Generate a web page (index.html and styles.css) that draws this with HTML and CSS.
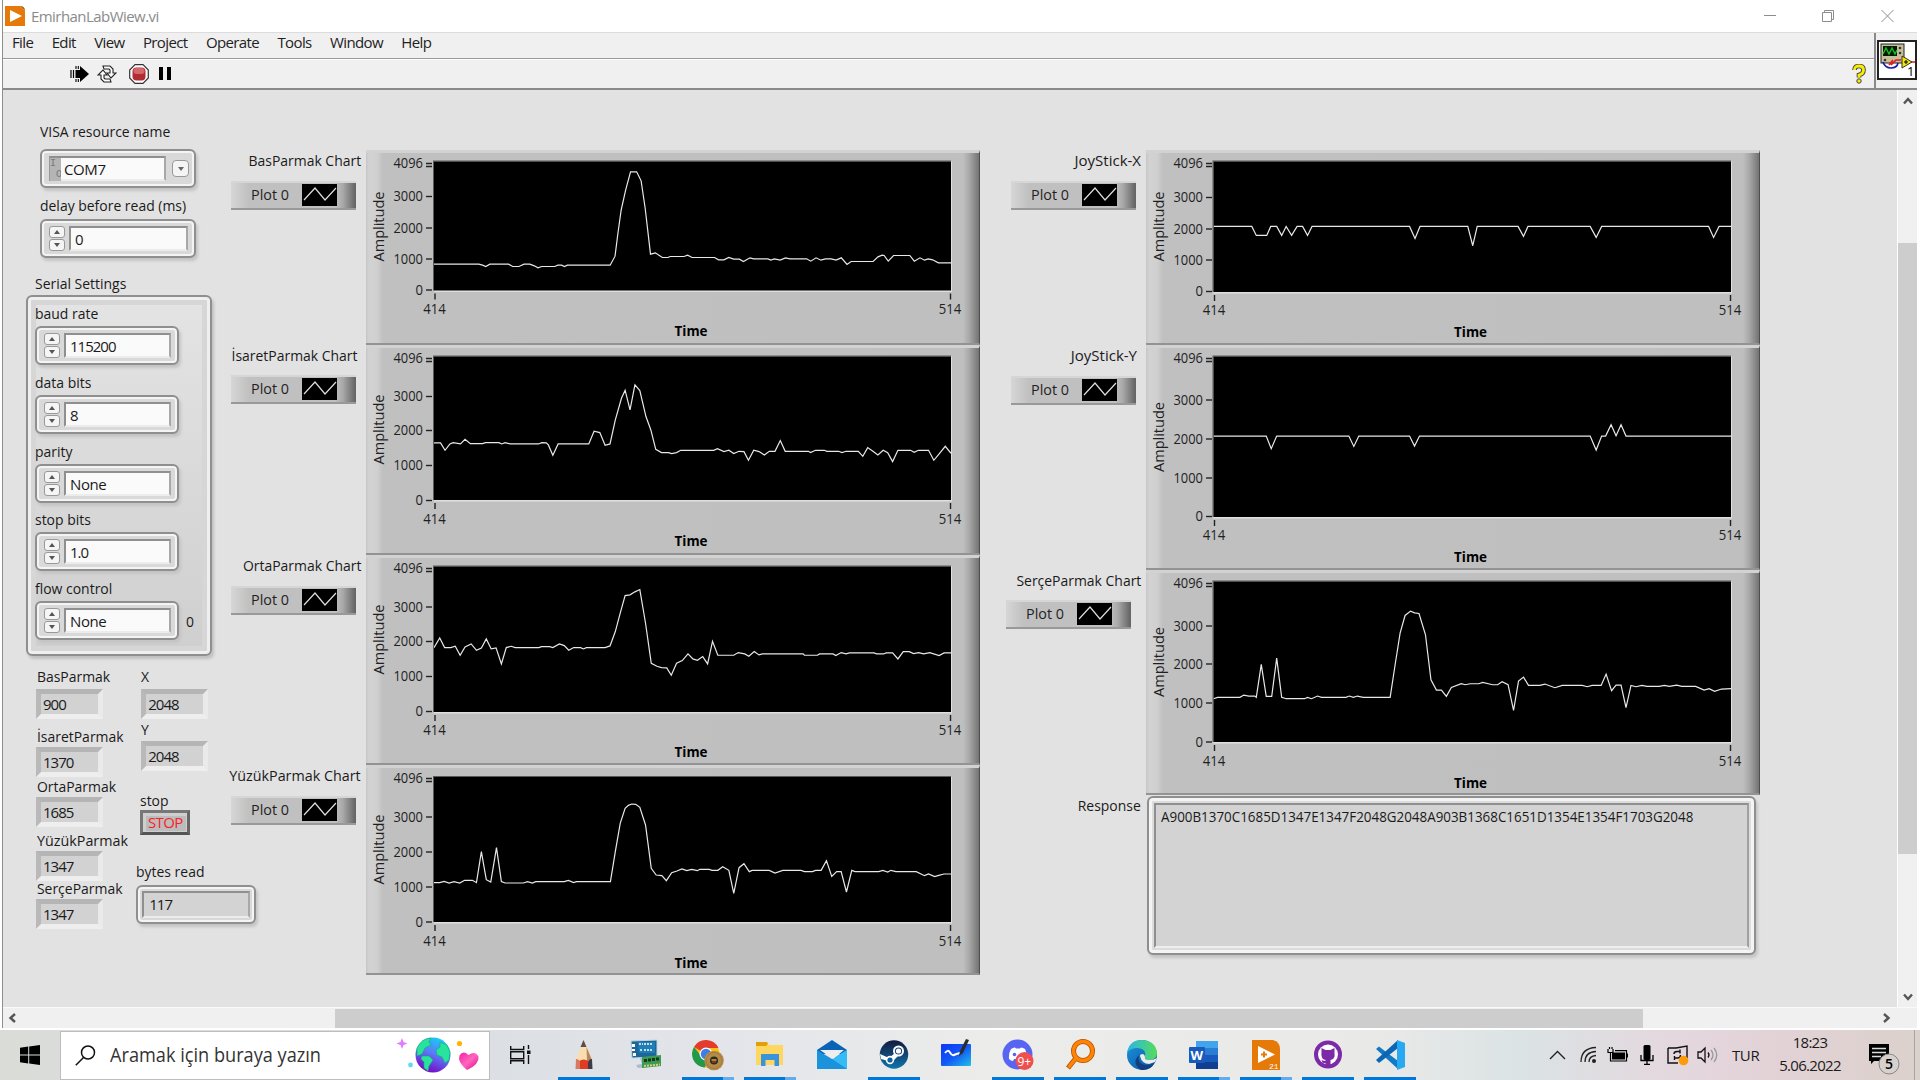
FILE: index.html
```html
<!DOCTYPE html>
<html lang="tr">
<head>
<meta charset="utf-8">
<title>EmirhanLabWiew.vi</title>
<link rel="stylesheet" href="styles.css">
</head>
<body>
<div class="window">
  <header class="titlebar">
    <svg class="app-icon" width="20" height="20" viewBox="0 0 20 20"><path d="M0 0h15l5 5v15H0z" fill="#e57a08"/><path d="M15 0q5 0 5 5z" fill="#b85e00"/><path d="M5 4v12l12-6z" fill="#fff"/></svg>
    <span class="title">EmirhanLabWiew.vi</span>
    <svg class="caption" width="130" height="14" viewBox="0 0 130 14" fill="none" stroke="#8d8d8d" stroke-width="1"><path d="M0 6.500h12M58.500 3.500h9v9h-9zM60.500 3.500v-2h9v9h-2M117.500 1l12 12M129.500 1l-12 12"/></svg>
  </header>

  <div class="bars">
    <div class="bars-main">
      <nav class="menubar"><span>File</span><span>Edit</span><span>View</span><span>Project</span><span>Operate</span><span>Tools</span><span>Window</span><span>Help</span></nav>
      <div class="toolbar">
        <svg class="tool-run" width="20" height="18" viewBox="0 0 20 18"><path d="M1 5v8M3.500 5v8" stroke="#000" stroke-width="1.200"/><path d="M5.500 5H10V1l9 8-9 8v-4H5.500z" fill="#000"/><path d="M6 1v3M8.300 1v3M6 14v3M8.300 14v3" stroke="#000" stroke-width="1.100"/></svg>
        <svg class="tool-loop" width="20" height="18" viewBox="0 0 20 18" fill="#fff" stroke="#222" stroke-width="1.100"><path d="M6 1h7l3 3v4h3l-5 5-4-5h3V5l-1-1H7z"/><path d="M14 17H7l-3-3v-4H1l5-5 4 5H7v3l1 1h5z"/></svg>
        <svg class="tool-stop" width="20" height="20" viewBox="0 0 20 20"><path d="M6 .7h8L19.300 6v8L14 19.300H6L.7 14V6z" fill="#fff" stroke="#333" stroke-width="1.200"/><rect x="3.500" y="3.500" width="13" height="13" rx="4" fill="#b22d33"/><rect x="4.500" y="4" width="11" height="6" rx="3" fill="#d2686b"/></svg>
        <svg class="tool-pause" width="12" height="14" viewBox="0 0 12 14"><path d="M0 0h4v13H0zM8 0h4v13H8z" fill="#000"/></svg>
        <svg class="tool-help" width="14" height="20" viewBox="0 0 14 20"><path d="M2.500 6q0-4 4.500-4t4.500 4-4.500 5v2.500" fill="none" stroke="#444" stroke-width="4.600"/><path d="M2.500 6q0-4 4.500-4t4.500 4-4.500 5v2.500" fill="none" stroke="#f8ec00" stroke-width="2.800"/><circle cx="7" cy="17" r="2.200" fill="#f8ec00" stroke="#444"/></svg>
      </div>
    </div>
    <div class="vi-icon">
      <svg width="40" height="40" viewBox="0 0 40 40"><rect x="1" y="1" width="38" height="38" fill="#fff" stroke="#222" stroke-width="2"/><rect x="4" y="4" width="23" height="19" fill="#c9bf9b" stroke="#222"/><rect x="6" y="6" width="14" height="10" fill="#061a06"/><path d="M6 14l3-6 3 6 3-6 3 6 2-4" fill="none" stroke="#11c322" stroke-width="1.400"/><g fill="#333"><circle cx="23" cy="8" r="1.300"/><circle cx="23" cy="13" r="1.300"/><circle cx="8" cy="20" r="1.300"/></g><path d="M6 22q2 6 8 6t7-5" fill="none" stroke="#1a1aa8" stroke-width="1.600"/><path d="M12 25l4-5M14 25l5-5h5M34 22h4" fill="none" stroke="#e01a1a" stroke-width="1.600"/><path d="M25 16v12l10-6z" fill="#f3e60a" stroke="#333"/><path d="M27 22h4M29 20v4" stroke="#000"/><text x="30" y="36" class="vi-num">1</text></svg>
    </div>
  </div>

  <main class="workspace">
    <div class="panel">
      <section class="controls">
        <div class="io">
          <label class="lbl">VISA resource name</label>
          <div class="ctl ctl-wide"><span class="visa-tag"><i>I</i><i>O</i></span><span class="field field-visa">COM7</span><span class="drop"></span></div>
          <label class="lbl lbl-delay">delay before read (ms)</label>
          <div class="ctl ctl-wide"><span class="spin"><b></b><b></b></span><span class="field num">0</span></div>
        </div>
        <label class="lbl lbl-serial">Serial Settings</label>
        <div class="cluster">
          <label class="lbl">baud rate</label>
          <div class="row"><div class="ctl"><span class="spin"><b></b><b></b></span><span class="field num">115200</span></div></div>
          <label class="lbl">data bits</label>
          <div class="row"><div class="ctl"><span class="spin"><b></b><b></b></span><span class="field num">8</span></div></div>
          <label class="lbl">parity</label>
          <div class="row"><div class="ctl"><span class="spin"><b></b><b></b></span><span class="field">None</span></div></div>
          <label class="lbl">stop bits</label>
          <div class="row"><div class="ctl"><span class="spin"><b></b><b></b></span><span class="field num">1.0</span></div></div>
          <label class="lbl">flow control</label>
          <div class="row"><div class="ctl"><span class="spin"><b></b><b></b></span><span class="field">None</span></div><span class="lbl">0</span></div>
        </div>
        <div class="readouts">
          <div class="fingers">
            <label class="lbl">BasParmak</label><div class="ind">900</div>
            <label class="lbl gap-a">İsaretParmak</label><div class="ind ind-near">1370</div>
            <label class="lbl gap-b">OrtaParmak</label><div class="ind ind-near">1685</div>
            <label class="lbl gap-c wide-u">YüzükParmak</label><div class="ind ind-near">1347</div>
            <label class="lbl gap-d">SerçeParmak</label><div class="ind ind-near">1347</div>
          </div>
          <div class="sticks">
            <label class="lbl">X</label><div class="ind">2048</div>
            <label class="lbl">Y</label><div class="ind ind-y">2048</div>
            <label class="lbl gap-stop">stop</label><div class="stop">STOP</div>
            <label class="lbl gap-bytes">bytes read</label><div class="ctl ctl-bytes"><span class="field num">117</span></div>
          </div>
        </div>
      </section>

      <section class="legends">
        <div class="leg"><label class="lbl">BasParmak Chart</label><div class="plotkey"></div></div>
        <div class="leg"><label class="lbl in3">İsaretParmak Chart</label><div class="plotkey up1"></div></div>
        <div class="leg"><label class="lbl">OrtaParmak Chart</label><div class="plotkey"></div></div>
        <div class="leg"><label class="lbl wide-u">YüzükParmak Chart</label><div class="plotkey"></div></div>
      </section>
      <section class="charts">
        <svg class="chart h195" data-chart="bas"></svg>
        <svg class="chart h210" data-chart="isaret"></svg>
        <svg class="chart h210" data-chart="orta"></svg>
        <svg class="chart h210" data-chart="yuzuk"></svg>
      </section>
      <section class="legends legends-right">
        <div class="leg"><label class="lbl full">JoyStick-X</label><div class="plotkey"></div></div>
        <div class="leg leg-tall"><label class="lbl full in4">JoyStick-Y</label><div class="plotkey"></div></div>
        <div class="leg leg-tall"><label class="lbl">SerçeParmak Chart</label><div class="plotkey shift5"></div></div>
        <div class="leg"><label class="lbl">Response</label></div>
      </section>
      <section class="charts">
        <svg class="chart h195" data-chart="joyx"></svg>
        <svg class="chart h225" data-chart="joyy"></svg>
        <svg class="chart h225" data-chart="serce"></svg>
        <div class="response"><div class="response-text"><span>A900B1370C1685D1347E1347F2048G2048A903B1368C1651D1354E1354F1703G2048</span></div></div>
      </section>
    </div>
    <div class="vscroll">
      <svg width="10" height="9" viewBox="0 0 10 9"><path d="M1 7.500l4-4.500 4 4.500" fill="none" stroke="#555" stroke-width="2.400"/></svg>
      <div class="vthumb"></div>
      <svg width="10" height="9" viewBox="0 0 10 9"><path d="M1 1.500l4 4.500 4-4.500" fill="none" stroke="#555" stroke-width="2.400"/></svg>
    </div>
  </main>
  <div class="hscroll">
    <svg width="9" height="10" viewBox="0 0 9 10"><path d="M7 1L2.500 5 7 9" fill="none" stroke="#555" stroke-width="2.400"/></svg>
    <div class="hthumb"></div>
    <svg width="9" height="10" viewBox="0 0 9 10"><path d="M2 1l4.500 4L2 9" fill="none" stroke="#555" stroke-width="2.400"/></svg>
  </div>
</div>

<footer class="taskbar">
  <div class="start"><svg width="20" height="20" viewBox="0 0 20 20"><path d="M0 2.800L8.200 1.600v7.900H0zM9.200 1.500L20 0v9.500H9.200zM0 10.500h8.200v7.900L0 17.200zM9.200 10.500H20V20L9.200 18.500z"/></svg></div>
  <div class="search">
    <svg width="21" height="21" viewBox="0 0 21 21" fill="none" stroke="#111" stroke-width="1.500"><circle cx="13" cy="7.500" r="6.500"/><path d="M8.500 12.500L.8 20.200"/></svg>
    <span class="search-text">Aramak için buraya yazın</span>
    <svg class="doodle" width="86" height="40" viewBox="0 0 86 40">
      <defs><linearGradient id="globe" x1=".7" y1="0" x2=".3" y2="1"><stop offset="0" stop-color="#16d0f5"/><stop offset=".45" stop-color="#5a7bf8"/><stop offset="1" stop-color="#7a00c2"/></linearGradient><linearGradient id="heart" x1="0" y1="0" x2="1" y2="1"><stop offset="0" stop-color="#f51fa8"/><stop offset=".5" stop-color="#ff66bd"/><stop offset="1" stop-color="#e0008a"/></linearGradient></defs>
      <path d="M5 3l1.500 4 4 1.500-4 1.500L5 14l-1.500-4-4-1.500 4-1.500z" fill="#e27bff"/>
      <circle cx="36" cy="20" r="17.500" fill="url(#globe)"/>
      <path d="M20 13q5-10 14-10l-2 4 2 3-6 3-3 6-5 2zM25 21l7 0 4 4-4 6-1 5-4-3v-6l-3-3zM43 7l7 3 3 7-1 8-4 3-3-6-5-2-1-5 4-3z" fill="#27e39b" stroke="#12a878" stroke-width=".6"/>
      <circle cx="62.500" cy="8.500" r="2.600" fill="#ffb300"/><circle cx="13.500" cy="30" r="2.400" fill="#62d9ee"/>
      <path d="M70 35q-10-8-7.500-14.500 3.500-5.500 9-.5 6.500-4.500 10 1.500 1 8-11.500 13.500z" fill="url(#heart)"/>
    </svg>
  </div>
  <div class="taskview"><svg width="22" height="20" viewBox="0 0 22 20" fill="none" stroke="#111" stroke-width="1.400"><path d="M.7 1v3.500h13V1M.7 6.700h13v7H.7zM.7 19v-3.300h13V19M18.500 0v4M18.500 10v9"/><path d="M17 5.500h3.500v3.500H17z" fill="#111" stroke="none"/></svg></div>
  <div class="apps">
    <div class="app on"><svg width="32" height="32" viewBox="0 0 32 32"><path d="M15.500 1L21 13l3 8-8.500 4L8 21z" fill="#f7deb0"/><path d="M15.500 1l3 7h-6z" fill="#5b4b52"/><path d="M18.500 8L24 21v3l-5-2z" fill="#b9855a"/><path d="M12 30l-1-8q5-3 9 0v8z" fill="#e23b23"/><path d="M8 20q3 0 4 3v7H7.500z" fill="#d87a62"/><path d="M24 20q-3 0-4 3v7h4.500z" fill="#3c3b47"/></svg></div>
    <div class="app"><svg width="32" height="32" viewBox="0 0 32 32"><path d="M1 2l26-1v17L2 19z" fill="#1c6797" stroke="#bdd5df"/><path d="M8 3h17v11H9z" fill="#1f7db8"/><path d="M9 5h4M14 5h9M10 11h3M14 11h9" stroke="#c4deec" stroke-width="2" stroke-dasharray="2 1"/><path d="M3.500 5v3M3.500 10v2M4.500 14v3" stroke="#fff" stroke-width="3"/><path d="M10 19h6v6h-4zM6 26l12-2v4l-10 1z" fill="#a9bccb"/><path d="M12 18l19-2v11l-19 2z" fill="#3e9a53"/><path d="M14 20h3v3h-3zM18 19.500h3v3h-3zM22 19h3v3h-3zM26 18.500h3v3h-3z" fill="#123a1d"/><path d="M14 27l16-1.500" stroke="#d6cf7a" stroke-width="2" stroke-dasharray="2 1"/></svg></div>
    <div class="app on split"><svg width="32" height="32" viewBox="0 0 32 32"><circle cx="14" cy="15" r="13.500" fill="#fbc116"/><path d="M14 15L2 8A13.700 13.700 0 0 1 26.500 9H14z" fill="#e33b2e"/><path d="M2 8a13.500 13.500 0 0 0 10.500 20.500L18 19l-8-1z" fill="#22984a"/><circle cx="14" cy="15" r="6.500" fill="#fff"/><circle cx="14" cy="15" r="5.200" fill="#3b7ded"/><circle cx="22" cy="21.500" r="9.800" fill="#b58b4a"/><circle cx="22" cy="21.500" r="8" fill="none" stroke="#a37a3c"/><circle cx="22" cy="21.500" r="4" fill="#2b2a25"/><path d="M19.500 21h5" stroke="#d4a82b" stroke-width="1.500"/><path d="M20 23h4" stroke="#a23822" stroke-width="1.500"/></svg></div>
    <div class="app on split"><svg width="32" height="32" viewBox="0 0 32 32"><path d="M2 3h11l2 3h14v20H2z" fill="#ffd75e"/><path d="M2 3h11l1 2-2 2H2z" fill="#dfa008"/><path d="M7 27V15h18v12h-4.500v-6h-9v6z" fill="#3a93dd"/></svg></div>
    <div class="app"><svg width="32" height="32" viewBox="0 0 32 32"><path d="M1 11L16 1l15 10v4H1z" fill="#0b63b8"/><path d="M1 11l15 9 15-9v19H1z" fill="#1b93dc"/><path d="M31 11v19L16 20z" fill="#35bbf5"/><path d="M4 11h24l-11 9z" fill="#eee"/></svg></div>
    <div class="app on"><svg width="32" height="32" viewBox="0 0 32 32"><defs><linearGradient id="steam" x1="0" y1="0" x2="0" y2="1"><stop offset="0" stop-color="#131a3d"/><stop offset="1" stop-color="#0f74ac"/></linearGradient></defs><circle cx="16" cy="15.500" r="14.200" fill="url(#steam)"/><path d="M2 15l9 4 6-5 3 3-6 6-11-3z" fill="#fff"/><circle cx="20.500" cy="12" r="5.500" fill="#fff"/><circle cx="20.500" cy="12" r="3.600" fill="#16406f"/><circle cx="20.500" cy="12" r="2.600" fill="#fff"/><circle cx="12" cy="21" r="4.200" fill="#fff"/><circle cx="12" cy="21" r="2.600" fill="#11629a"/></svg></div>
    <div class="app"><svg width="32" height="32" viewBox="0 0 32 32"><defs><linearGradient id="wb" x1="0" y1="0" x2="1" y2="1"><stop offset="0" stop-color="#0d35f5"/><stop offset=".5" stop-color="#1258f5"/><stop offset="1" stop-color="#22c0e8"/></linearGradient></defs><rect x="1" y="5" width="30" height="22" rx="1" fill="url(#wb)"/><path d="M5 14q3-4 5-.5t4 2.500 6-2" fill="none" stroke="#fff" stroke-width="2"/><path d="M26 0l3 1-6 13-4 3 1-5z" fill="#2c2c30"/></svg></div>
    <div class="app on"><svg width="32" height="32" viewBox="0 0 32 32"><circle cx="15.500" cy="15.500" r="15" fill="#5865f2"/><path d="M9 10q3-2 4-1.500l1 1h4l1-1q2 0 4 1.500 2.500 5 2 10-2 2-4 2l-1-2h-8l-1 2q-2 0-4-2-.5-6 2-10z" fill="#fff"/><circle cx="12.500" cy="15.500" r="1.800" fill="#5865f2"/><circle cx="22.500" cy="22" r="9" fill="#f04f50"/><text x="15.500" y="26.500" class="badge-9">9+</text></svg></div>
    <div class="app on"><svg width="32" height="32" viewBox="0 0 32 32" fill="none"><circle cx="19" cy="12" r="9.500" stroke="#b85000" stroke-width="5"/><path d="M12 19L4 29" stroke="#b85000" stroke-width="5"/><circle cx="19" cy="12" r="9.500" stroke="#ff8405" stroke-width="3.400"/><path d="M12.500 18.500L4.500 28.500" stroke="#ff8405" stroke-width="3.400"/></svg></div>
    <div class="app on"><svg width="32" height="32" viewBox="0 0 32 32"><defs><linearGradient id="edge1" x1="0" y1="0" x2="1" y2="0"><stop offset="0" stop-color="#2ab5e8"/><stop offset="1" stop-color="#55dc5a"/></linearGradient><linearGradient id="edge2" x1="0" y1="0" x2="1" y2="1"><stop offset="0" stop-color="#1a96df"/><stop offset="1" stop-color="#0c4f9e"/></linearGradient></defs><circle cx="16" cy="16" r="15" fill="url(#edge2)"/><path d="M1 14Q3 1 16 1q14 1 15 13 0 7-8 7-5 0-4-3 2-8-7-9Q4 9 1 14z" fill="url(#edge1)"/><path d="M13 16q-2 8 6 10 6 1 10-3-4 9-14 8-10-7-2-15z" fill="#123f80"/><path d="M14 17q2 8 9 8l6-2 2-4q-3 2-8 2-5 0-4-3 0-2-2-3-3 0-3 2z" fill="#ececec"/></svg></div>
    <div class="app on split"><svg width="32" height="32" viewBox="0 0 32 32"><path d="M8 2h22v28H8z" fill="#185abd"/><path d="M8 2h22v7H8z" fill="#41a5ee"/><path d="M8 9h22v7H8z" fill="#2b7cd3"/><path d="M8 23h22v7H8z" fill="#103f91"/><rect x="1" y="8" width="16" height="16" rx="1" fill="#185abd"/><text x="2.500" y="21" class="word-w">W</text></svg></div>
    <div class="app on split"><svg width="32" height="32" viewBox="0 0 32 32"><path d="M2 1h21q7 2 7 9v21H2z" fill="#e57a08"/><path d="M8 7v17l17-8.500z" fill="#fff"/><path d="M11 15.500h6M14 12.500v6" stroke="#e57a08" stroke-width="2"/><text x="19" y="29.500" class="lv-21">21</text></svg></div>
    <div class="app on"><svg width="32" height="32" viewBox="0 0 32 32"><circle cx="16" cy="15.500" r="14" fill="#7d2aa6"/><circle cx="16" cy="15.500" r="10" fill="#fff"/><path d="M9.500 9l4 2h5l4-2v5q1 6-4 7v6h-5v-3q-3 1-4-3 2 1 4 1v-1q-5-1-4-8z" fill="#7d2aa6"/></svg></div>
    <div class="app on"><svg width="32" height="32" viewBox="0 0 32 32"><path d="M2 10l3-2.500L24 22v8z" fill="#1279c6"/><path d="M2 21l3 3L24 9V1z" fill="#0b66b4"/><path d="M23 1l8 3v24l-8 3z" fill="#29a9f2"/></svg></div>
  </div>
  <div class="tray">
    <svg class="t-chev" width="17" height="10" viewBox="0 0 17 10" fill="none" stroke="#222" stroke-width="1.400"><path d="M1 9l7.500-7.500L16 9"/></svg>
    <svg class="t-wifi" width="18" height="18" viewBox="0 0 18 18" fill="none" stroke="#222" stroke-width="1.300"><path d="M1 16Q1 2 16 1.500M5 16Q5 6 16 5.500M9 16q0-6 7-6.500"/><circle cx="14" cy="15" r="2" fill="#222" stroke="none"/></svg>
    <svg class="t-bat" width="21" height="16" viewBox="0 0 21 16"><path d="M5 5.500h13v7H5z" fill="#000"/><path d="M3.500 7v7h16V3.700H8M20.500 6.500v4M1 2v3.500h5V2M2.500 2V0M5 2V0M3.500 6v3" fill="none" stroke="#000" stroke-width="1.200"/></svg>
    <svg class="t-mic" width="14" height="20" viewBox="0 0 14 20"><rect x="3.500" y="0" width="7" height="15" rx="1.500"/><path d="M1 10v5.500h12V10M7 15.500V19M4 19.300h6" fill="none" stroke="#000" stroke-width="1.300"/></svg>
    <svg class="t-sync" width="22" height="21" viewBox="0 0 22 21" fill="none" stroke="#111" stroke-width="1.400"><path d="M1 3h8l11-2v12M1 3v15h10"/><path d="M7 9q0-2.500 3-2.500h3M13 4.500v4M13.500 10q0 3-3 3H7M7.500 15v-4"/><circle cx="16.500" cy="15.500" r="4.800" fill="#ff9a0d" stroke="none"/></svg>
    <svg class="t-vol" width="21" height="18" viewBox="0 0 21 18" fill="none" stroke="#111" stroke-width="1.300"><path d="M1 6h3l4-4v14l-4-4H1zM11 6.500q2 2.500 0 5"/><path d="M14 4q4 5 0 10M17 2q5.500 7 0 14" stroke="#999"/></svg>
    <span class="lang">TUR</span>
    <div class="clock"><span>18:23</span><span>5.06.2022</span></div>
    <svg class="t-note" width="31" height="31" viewBox="0 0 31 31"><path d="M0 0h20v17H5l-3 3v-3H0z"/><path d="M3 4.500h14M3 8.500h14M3 12.500h9" stroke="#ddd" stroke-width="1.300"/><circle cx="20" cy="20" r="10" fill="#d7d1ce" stroke="#888"/><text x="20" y="25" class="note-n">5</text></svg>
    <i class="peek"></i>
  </div>
</footer>
<script src="charts.js"></script>
</body>
</html>
```
FILE: styles.css
```css
* { box-sizing: border-box; }
body { margin: 0; width: 1920px; height: 1080px; overflow: hidden; background: #fff; font-family: "Open Sans", "Noto Sans", sans-serif; font-size: 15px; color: #1a1a1a; }
svg { display: block; }
.window { width: 1915px; height: 1028px; border-left: 1px solid #8e8e8e; margin-left: 2px; display: flex; flex-direction: column; }

.titlebar { height: 32px; flex: none; display: flex; align-items: center; background: #fff; padding-left: 2px; }
.title { margin-left: 6px; color: #8b8b8b; letter-spacing: -.55px; }
.caption { margin-left: auto; margin-right: 23px; }

.bars { height: 58px; flex: none; display: flex; background: #f0f0f0; border-top: 1px solid #dcdcdc; border-bottom: 2px solid #8a8a8a; }
.bars-main { flex: 1; display: flex; flex-direction: column; border-right: 2px solid #8a8a8a; }
.menubar { height: 26px; display: flex; align-items: center; gap: 18.400px; padding: 0 0 7px 9px; border-bottom: 1px solid #9a9a9a; color: #222; letter-spacing: -.62px; }
.toolbar { flex: 1; display: flex; align-items: center; border-top: 1px solid #fff; padding: 0 0 1px 67px; }
.tool-loop { margin-left: 7px; }
.tool-stop { margin-left: 12px; }
.tool-pause { margin-left: 10px; }
.tool-help { margin-left: auto; margin-right: 8px; }
.vi-icon { width: 41px; padding: 7px 0 0 1px; }
.vi-num { font-size: 13px; }

.workspace { flex: 1; display: flex; min-height: 0; background: #e2e2e2; border-bottom: 1px solid #fafafa; }
.panel { flex: 1; display: flex; align-items: flex-start; }
.lbl { display: block; height: 20px; line-height: 20px; white-space: nowrap; transform: scaleX(.93); transform-origin: left; }
.lbl.full { transform: none; }
.lbl.wide-u { transform: scaleX(.955); }

.controls { width: 227px; padding-top: 31px; flex: none; }
.io { padding-left: 37px; }
.lbl-delay { margin-top: 6px; }
.io .ctl { margin-top: 8px; }
.io .lbl-delay { margin-top: 7px; }
.io .lbl-delay + .ctl { margin-top: 4px; }
.lbl-serial { margin: 15px 0 0 32px; }

.ctl { width: 143px; height: 39px; display: flex; align-items: center; gap: 4px; padding: 6px 7px; border: 2px solid #8f8f8f; border-radius: 6px; background: #d9d9d9; box-shadow: inset 0 0 0 2px #f4f4f4, 2px 3px 3px #c4c4c4; }
.ctl-wide { width: 156px; }
.field { flex: 1; align-self: stretch; margin: -1px; padding-left: 4px; background: #fafafa; border: 2px solid; border-color: #8f8f8f #a8a8a8 #ececec #8f8f8f; line-height: 22px; white-space: nowrap; letter-spacing: -.4px; }
.num, .ind { letter-spacing: -1px; }
.spin { width: 16px; display: flex; flex-direction: column; gap: 1px; margin-right: 1px; }
.spin b { height: 12px; border: 1px solid #999; border-radius: 3px; background: #f5f5f5; display: flex; align-items: center; justify-content: center; }
.spin b::before { content: ""; border: 3px solid transparent; border-top-width: 0; border-bottom: 4px solid #555; }
.spin b + b::before { border-top: 4px solid #555; border-bottom-width: 0; }
.visa-tag { width: 13px; align-self: stretch; margin: -1px -4px -1px 0; background: #b5b5b5; color: #777; font: 10px/11px "Liberation Mono", monospace; border-top: 2px solid #8f8f8f; border-left: 1px solid #999; }
.visa-tag i { display: block; font-style: normal; }
.visa-tag i + i { padding-left: 6px; }
.field-visa { padding-left: 3px; border-left: 0; }
.drop { width: 17px; height: 17px; margin: 0 -2px 0 3px; border: 1px solid #999; border-radius: 4px; background: #f4f4f4; display: flex; align-items: center; justify-content: center; }
.drop::before { content: ""; border: 3.500px solid transparent; border-top: 4px solid #666; border-bottom-width: 0; }

.cluster { margin: 2px 0 0 23px; width: 186px; height: 361px; padding: 6px 0 0 7px; border: 2px solid #8f8f8f; border-radius: 6px; background: linear-gradient(#e4e4e4, #cfcfcf); box-shadow: inset 0 0 0 3px #efefef, inset 0 0 0 8px #d6d6d6, 2px 3px 3px #c0c0c0; }
.cluster .row { display: flex; align-items: center; gap: 7px; height: 39px; margin: 3px 0 6.800px; }
.cluster .ctl { width: 144px; }

.readouts { display: flex; padding-left: 33px; margin-top: 10px; }
.fingers { width: 101px; }
.fingers .lbl { padding-left: 1px; }
.ind { width: 67px; height: 30px; margin-top: 3px; padding-left: 2px; line-height: 20px; border: 5px solid; border-color: #b5b5b5 #eaeaea #eeeeee #b9b9b9; background: #d2d2d2; }
.ind-near { margin-top: 1px; }
.ind-y { margin-top: 2px; }
.gap-a { margin-top: 7px; }
.gap-b { margin-top: -1px; }
.gap-c { margin-top: 3px; }
.gap-d { margin-top: -3px; }
.sticks { padding-left: 5px; margin-left: 4px; width: 130px; }
.gap-stop { margin-top: 19px; }
.sticks .gap-stop { margin-left: -1px; }
.stop { margin-left: -1px; width: 50px; height: 25px; line-height: 19px; text-align: center; color: #fb2028; background: #bcbcbc; border: 3px solid; border-color: #777 #666 #555 #777; box-shadow: inset 1px 1px 0 2px #cfcfcf; letter-spacing: -.7px; }
.gap-bytes { margin: 26px 0 0 -5px; }
.ctl-bytes { width: 120px; margin: 4px 0 0 -5px; padding: 5px; }
.ctl-bytes .field, .response-text { background: #d3d3d3; }
.ctl-bytes .field { padding-left: 5px; }

.legends { width: 136px; flex: none; padding: 60px 5px 0 0; }
.legends .lbl { transform-origin: right; }
.legends-right { width: 166px; padding-left: 30px; }
.leg { height: 210px; display: flex; flex-direction: column; align-items: flex-end; }
.leg:first-child { height: 195px; }
.leg-tall { height: 225px; }
.in3 { margin-right: 3px; }
.in4 { margin-right: 4px; }
.plotkey { margin: 11px 5px 0 0; width: 125px; height: 29px; display: flex; align-items: center; border-bottom: 2px solid #999; border-top: 2px solid #d6d6d6; background: linear-gradient(90deg, #d6d6d6, #c0c0c0 18px, #c0c0c0 104px, #a8a8a8 112px, #666 124px); }
.up1 { margin-top: 10px; }
.shift5 { margin: 10px 10px 0 0; }

.charts { width: 614px; flex: none; padding-top: 60px; }
.chart { width: 614px; border-top: 3px solid #d2d2d2; border-bottom: 2px solid #939393; border-right: 1px solid #4e4e4e; background: linear-gradient(90deg, #c6c6c6, #d2d2d2 3px, #d0d0d0 11px, #c0c0c0 17px, #bfbfbf 597px, #a9a9a9 603px, #6e6e6e 614px); }
.h195 { height: 195px; }
.h210 { height: 210px; }
.h225 { height: 225px; }
.chart text, .plotkey text { font-size: 15px; fill: #1f1f1f; }
.chart .axis-title { font-weight: 700; fill: #000; }
.chart .trace { fill: none; stroke: #e8e8e8; stroke-width: 1.200; }
.chart .tick { stroke: #222; stroke-width: 1.400; fill: none; }

.response { margin: 1px 0 0 1px; width: 609px; height: 159px; padding: 5px; border: 2px solid #8f8f8f; border-radius: 6px; background: #dcdcdc; box-shadow: inset 0 0 0 3px #f4f4f4, 2px 3px 3px #c4c4c4; }
.response-text { height: 145px; padding-left: 5px; line-height: 23px; border: 2px solid; border-color: #8f8f8f #a0a0a0 #eee #8f8f8f; white-space: nowrap; overflow: hidden; }
.response-text span { display: inline-block; transform: scaleX(.893); transform-origin: left; }

.vscroll { width: 20px; background: #f0f0f0; border-left: 1px solid #fff; display: flex; flex-direction: column; align-items: center; padding: 6px 0 5px; justify-content: space-between; }
.vthumb { width: 19px; height: 611px; margin: 0 0 2px; background: #cdcdcd; }
.hscroll { height: 20px; flex: none; background: #f0f0f0; display: flex; align-items: center; padding: 0 26px 0 5px; }
.hthumb { width: 1308px; height: 19px; margin: 0 auto 0 318px; background: #cdcdcd; }

.taskbar { margin-top: 2px; height: 50px; display: flex; align-items: center; background: linear-gradient(90deg, #dadcd8, #dcdfe3 500px, #e3e5ea 720px, #ececea 1000px, #e9e9e8 1380px, #dbe3e4 1520px, #e4d7de 1680px, #e2d2d6 1780px, #dbd1cb 1920px); }
.start { width: 60px; padding-left: 20px; }
.search { width: 430px; height: 49px; display: flex; align-items: center; padding-left: 14px; background: #fff; border: 1px solid #bdbdbd; }
.search-text { margin: -1px 0 0 14px; font-size: 20px; color: #333; white-space: nowrap; transform: scaleX(.908); transform-origin: left; }
.doodle { margin-left: auto; margin-right: 6px; }
.taskview { width: 63px; padding-left: 20px; }
.apps { display: flex; align-self: stretch; }
.app { width: 62px; padding: 9px 5px 0; display: flex; flex-direction: column; align-items: center; justify-content: space-between; }
.app.on::after { content: ""; width: 52px; height: 3px; background: #0078d7; }
.app.split::after { background: linear-gradient(90deg, #0078d7 41px, #62aceb 41px); }
.badge-9 { font-size: 12px; fill: #fff; }
.word-w { font-size: 13px; font-weight: 700; fill: #fff; }
.lv-21 { font: 8px "Liberation Mono", monospace; fill: #fff; }
.tray { flex: 1; display: flex; align-items: center; padding-left: 128px; height: 50px; }
.t-wifi { margin-left: 14px; }
.t-bat { margin-left: 9px; }
.t-mic { margin-left: 12px; }
.t-sync { margin-left: 13px; }
.t-vol { margin-left: 8px; }
.lang { margin-left: 14px; width: 29px; letter-spacing: -.4px; }
.clock { margin: -3px 0 0 9px; width: 80px; display: flex; flex-direction: column; align-items: center; gap: 3px; line-height: 20px; letter-spacing: -.7px; }
.t-note { margin: 9px 0 0 19px; }
.note-n { font-size: 14px; text-anchor: middle; font-weight: 600; }
.peek { width: 1px; height: 50px; margin-left: auto; margin-right: 5px; background: #a9a3a3; }
```
FILE: charts.js
```js
// Each chart: plot rectangle, Y-scale tick positions (0..4096), label centres,
// and its trace in the trace's own coordinate box.
var LEFT = { x: 68, w: 517, amp: 12.5, time: 325 };
var RIGHT = { x: 67.5, w: 517.5, amp: 12.5, time: 324.5 };
var CHARTS = {
  bas: { side: LEFT, y: 11.5, h: 129, ticks: [140, 109, 78, 46.5, 13.5], amp: 76.5, box: "181 64 1268 387",
    pts: "181,372 291,372 300,375 308,379 318,372 364,372 374,379 389,379 402,372 416,372 427,377 436,383 445,379 477,379 485,375 494,375 501,379 508,375 613,375 625,348 632,280 640,210 651,150 663,95 678,95 689,122 699,205 712,342 724,338 741,352 755,352 760,349 794,349 803,345 814,352 869,352 879,359 892,359 904,352 916,357 930,357 940,364 956,353 965,356 1000,356 1007,360 1016,356 1030,360 1043,353 1054,356 1095,356 1105,363 1118,353 1130,360 1141,356 1155,356 1167,360 1180,353 1194,373 1204,364 1258,364 1270,350 1280,345 1285,346 1295,363 1308,346 1348,346 1359,363 1373,353 1384,360 1393,356 1404,359 1418,368 1450,368" },
  isaret: { side: LEFT, y: 11.5, h: 143.5, ticks: [155.5, 120.5, 85.5, 51.5, 13.5], amp: 84.5, box: "181 650 1266 430",
    pts: "181,909 197,909 208,931 220,912 228,908 246,912 257,898 270,911 300,911 307,908 340,908 347,912 355,908 368,912 437,912 445,908 456,909 461,915 472,946 485,912 560,912 573,874 587,878 600,916 612,912 625,840 640,775 649,751 661,810 673,735 685,752 700,830 712,870 724,928 738,938 755,938 763,941 775,938 785,931 866,931 875,926 891,935 903,931 915,941 928,934 940,935 951,961 964,931 977,935 990,945 1002,934 1016,934 1029,902 1041,934 1098,934 1103,938 1115,931 1137,931 1143,934 1172,934 1180,938 1190,934 1220,934 1231,949 1243,923 1255,933 1268,945 1281,931 1292,938 1304,965 1317,931 1348,931 1357,937 1367,931 1392,931 1405,961 1418,942 1433,919 1447,940" },
  orta: { side: LEFT, y: 11.5, h: 145.500, ticks: [156.5, 121.5, 86.5, 52, 13.5], amp: 84.5, box: "181 50 1266 436",
    pts: "181,293 195,264 207,293 222,293 233,289 245,316 257,291 272,282 285,301 297,294 309,267 321,297 333,294 346,342 358,293 370,289 380,293 438,293 444,290 464,290 472,293 488,282 500,287 511,301 523,293 540,293 547,297 554,293 600,293 612,288 625,245 637,190 649,137 661,135 673,126 685,119 699,220 713,340 727,349 738,353 751,354 762,376 775,340 789,332 803,312 815,327 826,331 839,320 851,342 863,274 876,316 915,316 926,308 942,312 952,319 965,305 977,315 985,312 1085,312 1088,316 1120,316 1125,312 1158,312 1165,317 1178,308 1190,312 1198,309 1258,309 1265,312 1282,312 1288,309 1304,309 1317,327 1330,305 1345,305 1355,311 1368,308 1380,312 1395,308 1418,317 1430,309 1447,309" },
  yuzuk: { side: LEFT, y: 12, h: 145, ticks: [157, 122, 87, 52, 13.5], amp: 84.5, box: "181 681 1266 435",
    pts: "181,998 195,998 206,994 218,999 230,995 244,999 256,991 275,991 285,998 297,905 309,989 320,996 334,893 346,995 355,999 400,999 410,995 422,999 430,995 500,995 510,991 523,998 530,995 613,995 625,905 637,820 649,775 657,766 665,762 675,763 685,772 699,825 713,955 725,975 739,977 750,992 763,968 776,963 788,957 800,962 812,958 826,962 832,958 855,958 862,961 876,961 888,950 903,961 915,1030 928,953 940,941 953,965 960,961 1002,961 1016,969 1035,961 1080,961 1088,965 1108,965 1115,961 1129,961 1142,932 1155,979 1167,965 1178,965 1191,1026 1204,961 1212,965 1270,965 1280,961 1292,966 1300,961 1312,965 1362,965 1382,977 1392,972 1407,980 1417,976 1430,972 1447,972" },
  joyx: { side: RIGHT, y: 11.5, h: 130.500, ticks: [141.5, 110, 79, 47.5, 13.5], amp: 76.5, box: "429 64 1040 392",
    pts: "429,259 506,259 515,286 536,286 544,259 556,259 566,286 575,259 586,286 597,259 608,259 618,286 627,259 823,259 834,295 844,259 940,259 950,317 959,259 1041,259 1052,289 1061,259 1186,259 1198,292 1209,259 1424,259 1434,292 1445,259 1469,259" },
  joyy: { side: RIGHT, y: 11.5, h: 160.500, ticks: [171.5, 133, 94, 55, 13.5], amp: 92, box: "429 650 1040 482",
    pts: "429,889 535,889 545,927 556,889 701,889 711,920 721,889 823,889 833,919 843,889 1186,889 1198,931 1209,889 1217,889 1228,855 1238,888 1248,855 1258,889 1469,889" },
  serce: { side: RIGHT, y: 11.5, h: 160.500, ticks: [172, 133, 94, 56, 13.5], amp: 92, box: "429 65 1040 482",
    pts: "429,417 437,413 482,413 490,406 500,409 512,409 515,413 525,314 535,410 546,410 556,295 566,413 575,417 612,417 618,413 626,417 638,409 646,413 695,413 702,409 710,413 718,409 730,413 784,413 794,315 804,220 814,167 825,154 833,159 842,161 855,225 866,360 877,391 887,391 897,410 907,383 927,372 935,375 945,372 962,372 970,368 990,375 1000,375 1009,366 1021,375 1032,452 1042,364 1052,352 1062,377 1085,377 1095,373 1115,384 1130,377 1170,377 1180,381 1190,377 1208,377 1218,343 1229,393 1238,376 1248,376 1258,444 1268,377 1278,381 1290,377 1300,380 1325,380 1335,377 1345,380 1360,376 1370,380 1398,380 1415,391 1425,387 1436,395 1450,388 1469,387" }
};

function label(x, y, text, width, anchor, extra) {
  return '<text x="' + x + '" y="' + y + '" text-anchor="' + anchor + '" textLength="' + width +
    '" lengthAdjust="spacingAndGlyphs"' + (extra || "") + ">" + text + "</text>";
}

document.querySelectorAll(".chart").forEach(function (svg) {
  var c = CHARTS[svg.dataset.chart], s = c.side, zero = c.ticks[0], right = s.x + s.w - 0.5, out = "";
  out += '<rect x="' + (s.x - 1) + '" y="' + (c.y - 1) + '" width="' + (s.w + 1) + '" height="' + (c.h + 1) + '" fill="#5a5a5a"/>';
  out += '<rect x="' + s.x + '" y="' + c.y + '" width="' + (s.w + 1) + '" height="' + (c.h + 1.5) + '" fill="#e0e0e0"/>';
  out += '<rect x="' + s.x + '" y="' + c.y + '" width="' + s.w + '" height="' + c.h + '"/>';
  [0, 1000, 2000, 3000, 4096].forEach(function (v, i) {
    var y = c.ticks[i];
    out += label(57, y + 4.5, v, v ? 29.5 : 7.5, "end");
    out += '<path class="tick" d="M60 ' + y + "h6" + (i === 4 ? "M60 " + (y + 3) + "h6" : "") + '"/>';
  });
  out += '<path class="tick" d="M' + (s.x + 1) + " " + (c.y + c.h + 3) + "v6M" + right + " " + (c.y + c.h + 3) + 'v6"/>';
  out += label(s.x + 0.5, zero + 23.5, "414", 22.5, "middle") + label(right - 0.5, zero + 23.5, "514", 22.5, "middle");
  out += label(s.time, zero + 45.5, "Time", 33, "middle", ' class="axis-title"');
  out += label(0, 0, "Amplitude", 70, "middle", ' transform="translate(' + (s.amp + 5) + " " + c.amp + ') rotate(-90)"');
  out += '<svg x="' + s.x + '" y="' + c.y + '" width="' + s.w + '" height="' + c.h + '" viewBox="' + c.box +
    '" preserveAspectRatio="none"><polyline class="trace" vector-effect="non-scaling-stroke" points="' + c.pts + '"/></svg>';
  svg.setAttribute("viewBox", "0 3 613 " + (svg.getBoundingClientRect().height - 5));
  svg.innerHTML = out;
});

document.querySelectorAll(".plotkey").forEach(function (key) {
  key.innerHTML = '<svg width="125" height="25" viewBox="0 0 125 25">' + label(20, 17, "Plot 0", 38, "start") +
    '<rect x="71" y="1" width="35" height="22"/><path d="M73 17L84 5l10 12L105 5" fill="none" stroke="#ddd" stroke-width="1.200"/></svg>';
});
```
